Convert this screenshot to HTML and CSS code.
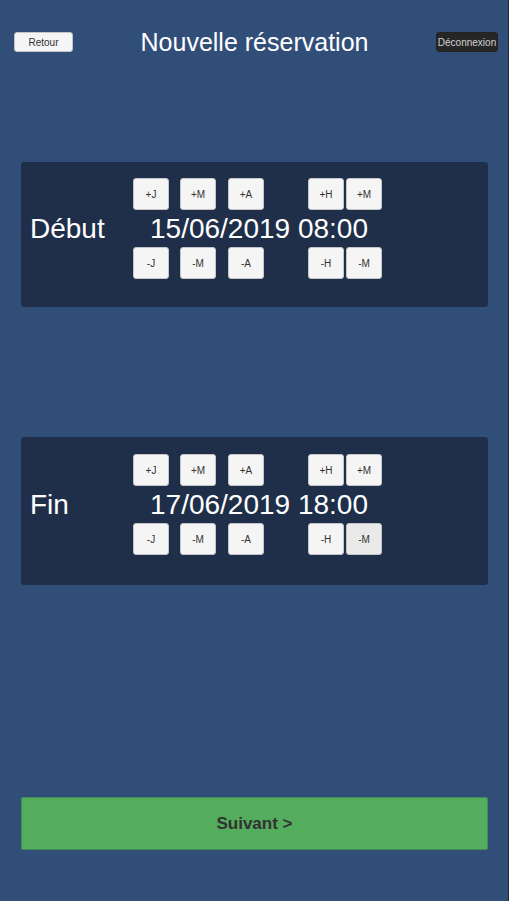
FILE: index.html
```html
<!DOCTYPE html>
<html lang="fr">
<head>
  <meta charset="utf-8">
  <meta name="viewport" content="width=device-width, initial-scale=1">
  <title>Nouvelle réservation</title>
  <link rel="stylesheet" href="styles.css">
</head>
<body>
  <header class="topbar">
    <button class="btn btn-back" type="button">Retour</button>
    <h1 class="title">Nouvelle réservation</h1>
    <button class="btn btn-logout" type="button">Déconnexion</button>
  </header>
  <main class="content">
    <section class="card card-start">
      <h2 class="label">Début</h2>
      <div class="picker">
        <div class="steps">
          <button class="btn step" type="button">+J</button>
          <button class="btn step" type="button">+M</button>
          <button class="btn step" type="button">+A</button>
          <button class="btn step" type="button">+H</button>
          <button class="btn step" type="button">+M</button>
        </div>
        <time class="value" datetime="2019-06-15T08:00">15/06/2019 08:00</time>
        <div class="steps">
          <button class="btn step" type="button">-J</button>
          <button class="btn step" type="button">-M</button>
          <button class="btn step" type="button">-A</button>
          <button class="btn step" type="button">-H</button>
          <button class="btn step" type="button">-M</button>
        </div>
      </div>
    </section>
    <section class="card card-end">
      <h2 class="label">Fin</h2>
      <div class="picker">
        <div class="steps">
          <button class="btn step" type="button">+J</button>
          <button class="btn step" type="button">+M</button>
          <button class="btn step" type="button">+A</button>
          <button class="btn step" type="button">+H</button>
          <button class="btn step" type="button">+M</button>
        </div>
        <time class="value" datetime="2019-06-17T18:00">17/06/2019 18:00</time>
        <div class="steps">
          <button class="btn step" type="button">-J</button>
          <button class="btn step" type="button">-M</button>
          <button class="btn step" type="button">-A</button>
          <button class="btn step" type="button">-H</button>
          <button class="btn step step-active" type="button">-M</button>
        </div>
      </div>
    </section>
    <button class="next" type="button">Suivant &gt;</button>
  </main>
</body>
</html>
```
FILE: styles.css
```css
* {
  box-sizing: border-box;
}

body {
  display: flex;
  flex-direction: column;
  min-height: 100vh;
  margin: 0;
  border-right: 1px solid #252a30;
  background: #314e79;
  color: #fff;
  font-family: "Liberation Sans", Arial, sans-serif;
}

button {
  margin: 0;
  padding: 0;
  font-family: inherit;
}

.topbar {
  display: flex;
  align-items: center;
  justify-content: space-between;
  padding: 27px 10px 0 14px;
}

.title {
  margin: 0;
  font-size: 25px;
  font-weight: 400;
  line-height: 30px;
}

.btn {
  border: 1px solid #c3c5c8;
  border-radius: 3px;
  background: #f5f5f5;
  color: #323232;
  font-size: 10px;
}

.btn-back {
  width: 59px;
  height: 20px;
}

.btn-logout {
  width: 62px;
  height: 20px;
  border-color: #222;
  background: #262626;
  color: #d2d2d2;
}

.content {
  display: flex;
  flex: 1;
  flex-direction: column;
  padding: 105px 20px 51px 21px;
}

.card {
  display: grid;
  grid-template-columns: 103px 1fr;
  align-items: center;
  padding: 16px 9px 28px;
  border-radius: 3px;
  background: #1f2f49;
}

.card-end {
  margin-top: 130px;
  padding: 17px 9px 30px;
}

.label {
  margin: 0;
  font-size: 28px;
  font-weight: 400;
  line-height: 36px;
}

.steps {
  display: grid;
  grid-template-columns: 47px 48px 80px 38px 36px;
}

.step {
  width: 36px;
  height: 32px;
}

.step-active {
  background: #e9e9e9;
}

.value {
  display: block;
  padding-left: 17px;
  font-size: 28px;
  line-height: 37px;
}

.next {
  width: 100%;
  height: 53px;
  margin-top: auto;
  border: 1px solid #438b58;
  border-radius: 2px;
  background: #54ac5d;
  color: #323232;
  font-size: 17px;
  font-weight: 700;
}
```
